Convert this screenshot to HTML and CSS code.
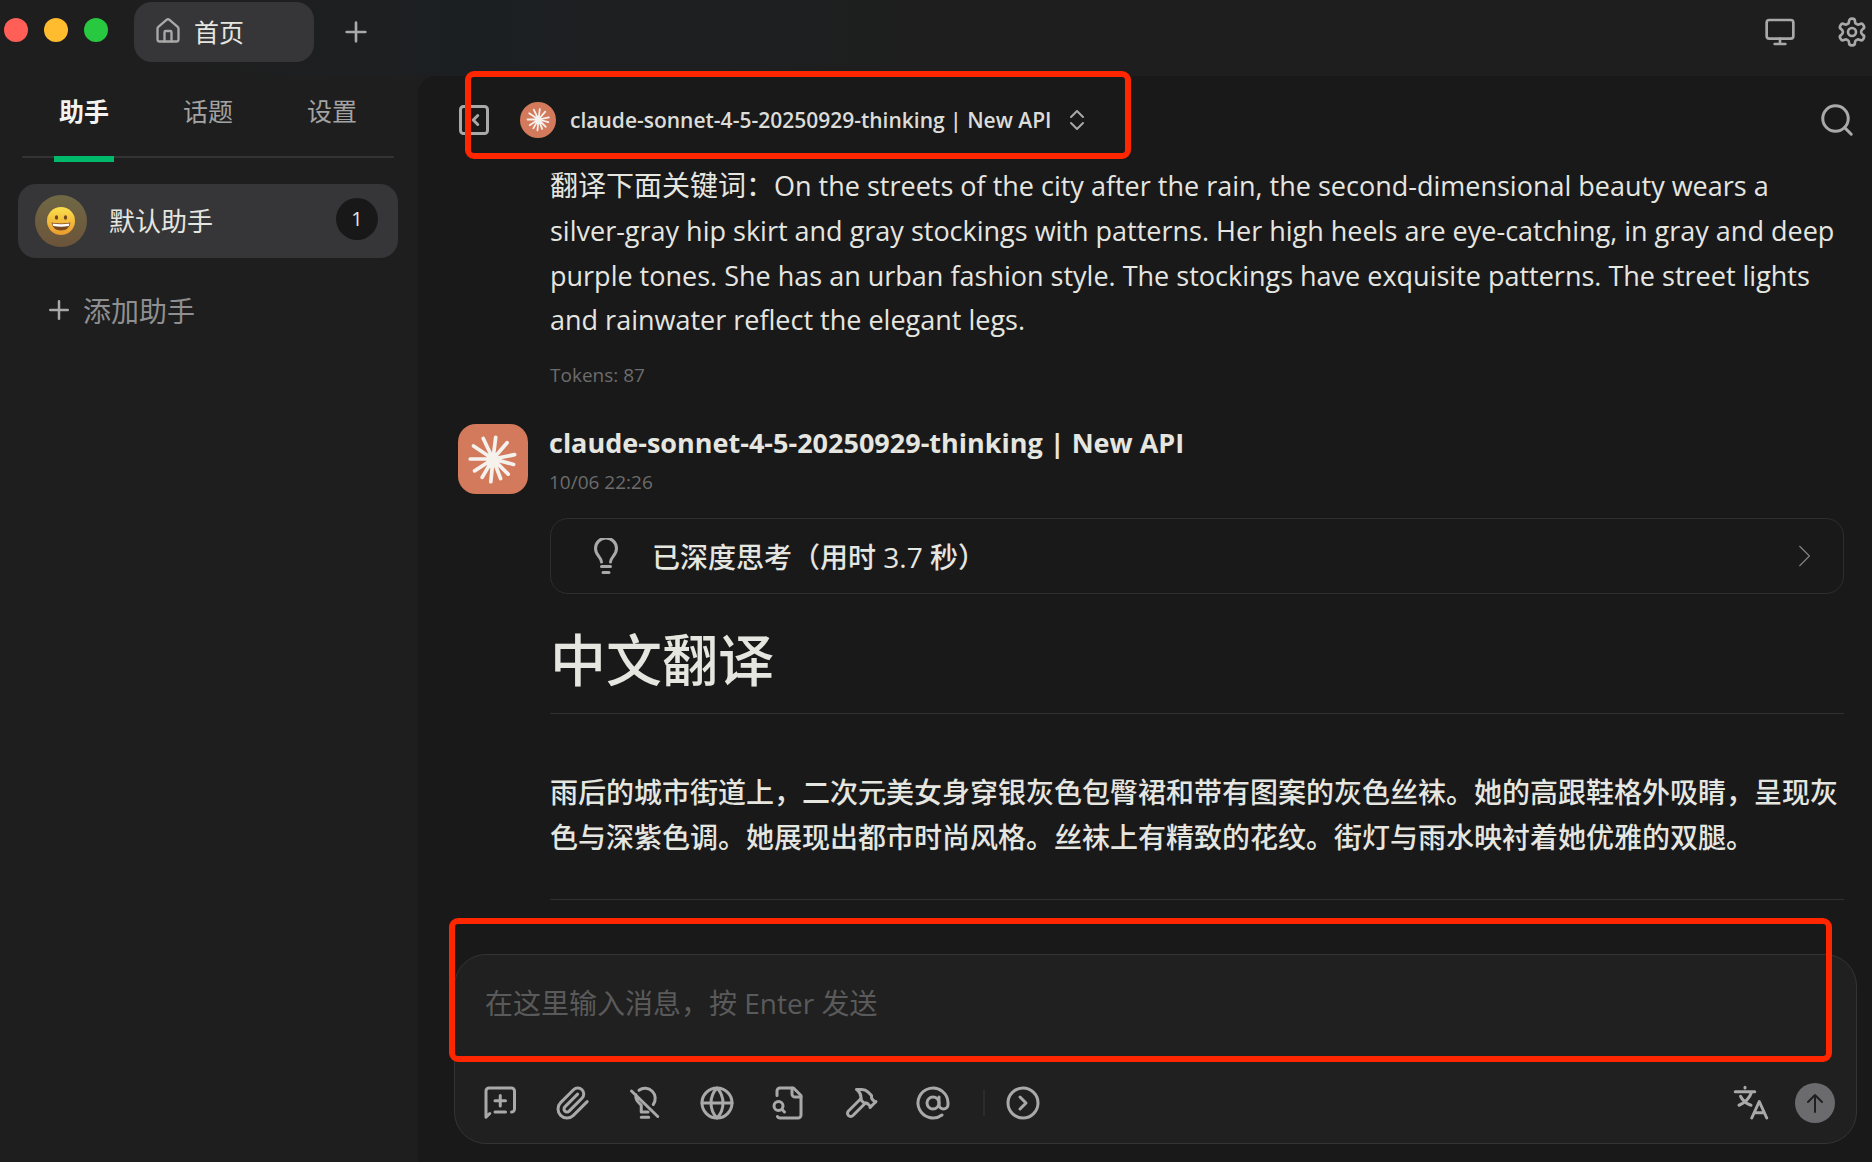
FILE: index.html
```html
<!DOCTYPE html>
<html lang="zh-CN">
<head>
    <meta charset="UTF-8">
    <meta name="viewport" content="width=device-width, initial-scale=1.0">
    <title>首页</title>
    <link rel="stylesheet" href="styles.css">
</head>
<body>

<!-- Title bar -->
<header class="titlebar">
    <div class="window-dots">
        <span class="dot red"></span>
        <span class="dot yellow"></span>
        <span class="dot green"></span>
    </div>
    <button class="window-tab">
        <svg class="icon icon-home" viewBox="0 0 24 24"><path d="M15 21v-8a1 1 0 0 0-1-1h-4a1 1 0 0 0-1 1v8"/><path d="M3 10a2 2 0 0 1 .709-1.528l7-5.999a2 2 0 0 1 2.582 0l7 5.999A2 2 0 0 1 21 10v9a2 2 0 0 1-2 2H5a2 2 0 0 1-2-2z"/></svg>
        首页
    </button>
    <button class="icon-btn new-tab" aria-label="新建标签页">
        <svg class="icon" viewBox="0 0 24 24"><path d="M5 12h14M12 5v14"/></svg>
    </button>
    <div class="titlebar-actions">
        <button class="icon-btn" aria-label="主题">
            <svg class="icon" viewBox="0 0 24 24"><rect x="2" y="3" width="20" height="14" rx="2"/><path d="M8 21h8M12 17v4"/></svg>
        </button>
        <button class="icon-btn" aria-label="设置">
            <svg class="icon" viewBox="0 0 24 24"><path d="M12.22 2h-.44a2 2 0 0 0-2 2v.18a2 2 0 0 1-1 1.73l-.43.25a2 2 0 0 1-2 0l-.15-.08a2 2 0 0 0-2.73.73l-.22.38a2 2 0 0 0 .73 2.73l.15.1a2 2 0 0 1 1 1.72v.51a2 2 0 0 1-1 1.74l-.15.09a2 2 0 0 0-.73 2.73l.22.38a2 2 0 0 0 2.73.73l.15-.08a2 2 0 0 1 2 0l.43.25a2 2 0 0 1 1 1.73V20a2 2 0 0 0 2 2h.44a2 2 0 0 0 2-2v-.18a2 2 0 0 1 1-1.73l.43-.25a2 2 0 0 1 2 0l.15.08a2 2 0 0 0 2.73-.73l.22-.39a2 2 0 0 0-.73-2.73l-.15-.08a2 2 0 0 1-1-1.74v-.5a2 2 0 0 1 1-1.74l.15-.09a2 2 0 0 0 .73-2.73l-.22-.38a2 2 0 0 0-2.73-.73l-.15.08a2 2 0 0 1-2 0l-.43-.25a2 2 0 0 1-1-1.73V4a2 2 0 0 0-2-2z"/><circle cx="12" cy="12" r="3"/></svg>
        </button>
    </div>
</header>

<div class="layout">
    <!-- Sidebar -->
    <aside class="sidebar">
        <nav class="side-tabs">
            <button class="side-tab active">助手</button>
            <button class="side-tab">话题</button>
            <button class="side-tab">设置</button>
        </nav>
        <button class="assistant">
            <span class="assistant-avatar">
                <svg viewBox="0 0 28 28">
                    <defs>
                        <linearGradient id="face" x1="0" y1="0" x2="0" y2="1">
                            <stop offset="0" stop-color="#fbe04e"/>
                            <stop offset="1" stop-color="#eb9a2c"/>
                        </linearGradient>
                    </defs>
                    <circle cx="14" cy="14" r="14" fill="url(#face)"/>
                    <ellipse cx="9.5" cy="10.5" rx="1.6" ry="2.2" fill="#70451c"/>
                    <ellipse cx="18.5" cy="10.5" rx="1.6" ry="2.2" fill="#70451c"/>
                    <path d="M4.5 15.5q9.5 2 19 0q-1.5 8-9.5 8t-9.5-8z" fill="#7a4a1e"/>
                    <path d="M5.500 16.500q8.500 1.500 17 0l-.8 2.500q-7.700 1.500-15.400 0z" fill="#fff"/>
                </svg>
            </span>
            <span class="assistant-name">默认助手</span>
            <span class="badge">1</span>
        </button>
        <button class="add-assistant">
            <svg class="icon" viewBox="0 0 24 24"><path d="M5 12h14M12 5v14"/></svg>
            添加助手
        </button>
    </aside>

    <!-- Chat -->
    <main class="chat">
        <div class="chat-header">
            <button class="icon-btn" aria-label="收起侧栏">
                <svg class="icon" viewBox="0 0 24 24"><rect x="3" y="3" width="18" height="18" rx="2"/><path d="m14.500 9-3 3 3 3"/></svg>
            </button>
            <button class="model-select">
                <span class="logo logo-small"><svg viewBox="0 0 48 48"><use href="#burst"/></svg></span>
                claude-sonnet-4-5-20250929-thinking | New API
                <svg class="icon icon-updown" viewBox="0 0 24 24"><path d="m6 15 6 6 6-6M6 9l6-6 6 6"/></svg>
            </button>
            <button class="icon-btn search" aria-label="搜索">
                <svg class="icon" viewBox="0 0 24 24"><circle cx="11" cy="11" r="8.500"/><path d="m21.500 21.500-4.400-4.400"/></svg>
            </button>
            <div class="highlight highlight-model"></div>
        </div>

        <div class="messages">
            <div class="message-user">
                <p>翻译下面关键词：<span lang="en">On the streets of the city after the rain, the second-dimensional beauty wears a silver-gray hip skirt and gray stockings with patterns. Her high heels are eye-catching, in gray and deep purple tones. She has an urban fashion style. The stockings have exquisite patterns. The street lights and rainwater reflect the elegant legs.</span></p>
                <div class="tokens">Tokens: 87</div>
            </div>

            <div class="message-head">
                <span class="logo logo-large">
                    <svg viewBox="0 0 48 48">
                        <g id="burst" stroke="#f5f2ee" stroke-width="3.400" stroke-linecap="round">
                            <path d="M24 24 15 5M24 24 26.500 4M24 24 37 9M24 24 44 20M24 24 43 29M24 24 38 38M24 24 31 42M24 24 22 45M24 24 14 41M24 24 7 35M24 24 3 24M24 24 6 12"/>
                        </g>
                    </svg>
                </span>
                <div>
                    <div class="message-name">claude-sonnet-4-5-20250929-thinking | New API</div>
                    <div class="message-time">10/06 22:26</div>
                </div>
            </div>

            <div class="message-body">
                <button class="thinking">
                    <svg class="icon icon-bulb" viewBox="0 0 24 24"><path d="M9 16c0-3-4-4.500-4-9a7 7 0 0 1 14 0c0 4.500-4 6-4 9M9 19h6M10 23h4"/></svg>
                    <span>已深度思考（用时 3.7 秒）</span>
                    <svg class="icon icon-more" viewBox="0 0 24 24"><path d="m8 3 9 9-9 9"/></svg>
                </button>
                <h1>中文翻译</h1>
                <p class="answer">雨后的城市街道上，二次元美女身穿银灰色包臀裙和带有图案的灰色丝袜。她的高跟鞋格外吸睛，呈现灰色与深紫色调。她展现出都市时尚风格。丝袜上有精致的花纹。街灯与雨水映衬着她优雅的双腿。</p>
                <hr>
            </div>
        </div>

        <!-- Message input -->
        <div class="composer">
            <textarea class="composer-input" rows="1" aria-label="消息" placeholder="在这里输入消息，按 Enter 发送"></textarea>
            <div class="toolbar">
                <button class="icon-btn" aria-label="新话题"><svg class="icon" viewBox="0 0 24 24"><path d="M19 18a2 2 0 0 0 2-2V4a2 2 0 0 0-2-2H4a2 2 0 0 0-2 2v17.500L4.500 19M11.500 7v7M8 10.500h7M8 18h7"/></svg></button>
                <button class="icon-btn" aria-label="附件"><svg class="icon" viewBox="0 0 24 24"><path d="m21.440 11.050-9.190 9.190a6 6 0 0 1-8.490-8.490l8.570-8.570A4 4 0 1 1 18 8.840l-8.590 8.570a2 2 0 0 1-2.830-2.830l8.490-8.480"/></svg></button>
                <button class="icon-btn" aria-label="思考"><svg class="icon" viewBox="0 0 24 24"><path d="M8 3.500A6.800 6.800 0 0 1 17.500 13M6 6.500C5 10 8 12 9.500 13.500V18H14M9.500 21.500h5M3 4l17.500 17"/></svg></button>
                <button class="icon-btn" aria-label="网络搜索"><svg class="icon" viewBox="0 0 24 24"><circle cx="12" cy="12" r="10"/><path d="M12 2a14.500 14.500 0 0 0 0 20 14.500 14.500 0 0 0 0-20M2 12h20"/></svg></button>
                <button class="icon-btn" aria-label="知识库"><svg class="icon" viewBox="0 0 24 24"><path d="M14 2v4a2 2 0 0 0 2 2h4"/><path d="M4.268 21a2 2 0 0 0 1.727 1H18a2 2 0 0 0 2-2V7l-5-5H6a2 2 0 0 0-2 2v3"/><path d="m9 18-1.500-1.500"/><circle cx="5" cy="14" r="3"/></svg></button>
                <button class="icon-btn" aria-label="工具"><svg class="icon" viewBox="0 0 24 24"><path d="m15 12-8.373 8.373a1 1 0 1 1-3-3L12 9"/><path d="m18 15 4-4"/><path d="m21.500 11.500-1.914-1.914A2 2 0 0 1 19 8.172V7l-2.260-2.260a6 6 0 0 0-4.202-1.756L9 2.960l.92.820A6.180 6.180 0 0 1 12 8.400V10l2 2h1.172a2 2 0 0 1 1.414.586L18.500 14.500"/></svg></button>
                <button class="icon-btn" aria-label="选择模型"><svg class="icon" viewBox="0 0 24 24"><circle cx="12" cy="12" r="4"/><path d="M16 8v5a3 3 0 0 0 6 0v-1a10 10 0 1 0-4 8"/></svg></button>
                <span class="divider"></span>
                <button class="icon-btn" aria-label="展开"><svg class="icon" viewBox="0 0 24 24"><circle cx="12" cy="12" r="10"/><path d="m10 8 4 4-4 4"/></svg></button>
                <div class="toolbar-right">
                    <button class="icon-btn" aria-label="翻译"><svg class="icon" viewBox="0 0 24 24"><path d="M1.500 4.500h13M8 1.500v.5M12.500 4.500C11 9 7.500 12 4 13.500M5 7.500c1.500 3 4 5 7 6M12.500 22l5-11 5 11M14.200 18.500h6.600"/></svg></button>
                    <button class="send" aria-label="发送"><svg class="icon" viewBox="0 0 24 24"><path d="m5 11 7-7 7 7M12 4v17"/></svg></button>
                </div>
            </div>
            <div class="highlight highlight-input"></div>
        </div>
    </main>
</div>

</body>
</html>
```

FILE: styles.css
```css
* {
    box-sizing: border-box;
}

body {
    margin: 0;
    height: 100vh;
    display: flex;
    flex-direction: column;
    overflow: hidden;
    background: #1e1e1e;
    color: #e6e6e1;
    font-family: "Open Sans", "Noto Sans CJK SC", sans-serif;
    font-size: 28px;
}

button {
    font: inherit;
    color: inherit;
    background: none;
    border: none;
    padding: 0;
    display: flex;
    align-items: center;
    cursor: pointer;
}

.icon {
    width: 36px;
    height: 36px;
    flex: none;
    fill: none;
    stroke: #a9a9a9;
    stroke-width: 2;
    stroke-linecap: round;
    stroke-linejoin: round;
}

/* Title bar */
.titlebar {
    height: 76px;
    flex: none;
    display: flex;
    align-items: flex-start;
    padding: 2px 4px 0;
    background: linear-gradient(90deg, #1e1e1e 10%, #1c1f22 25%, #1e1e1e 50%);
}

.window-dots {
    display: flex;
    gap: 16px;
    padding-top: 16px;
    margin-right: 26px;
}

.dot {
    width: 24px;
    height: 24px;
    border-radius: 50%;
}

.red {
    background: #ff5f57;
}

.yellow {
    background: #febc2e;
}

.green {
    background: #28c840;
}

.window-tab {
    width: 180px;
    height: 60px;
    gap: 12px;
    padding: 0 0 2px 20px;
    border-radius: 18px;
    background: #363638;
    font-size: 25px;
}

.icon-home {
    width: 28px;
    height: 28px;
}

.new-tab {
    height: 60px;
    margin-left: 26px;
}

.new-tab .icon {
    width: 32px;
    height: 32px;
}

.titlebar-actions {
    display: flex;
    gap: 40px;
    height: 60px;
    margin-left: auto;
}

.titlebar-actions .icon {
    width: 32px;
    height: 32px;
}

/* Sidebar */
.layout {
    flex: 1;
    min-height: 0;
    display: flex;
}

.sidebar {
    width: 418px;
    flex: none;
    padding: 0 20px 0 18px;
}

.side-tabs {
    display: flex;
    height: 82px;
    margin: 0 4px 26px;
    border-bottom: 2px solid #333;
}

.side-tab {
    flex: 1;
    height: 86px;
    padding-bottom: 18px;
    justify-content: center;
    font-size: 25px;
    color: #a3a3a3;
    background: linear-gradient(#00b96b, #00b96b) center bottom / 0 6px no-repeat;
}

.side-tab.active {
    color: #f2f2ee;
    font-weight: bold;
    background-size: 60px 6px;
}

.assistant {
    width: 100%;
    height: 74px;
    padding: 0 20px 0 17px;
    border-radius: 18px;
    background: #363638;
    font-size: 26px;
}

.assistant-avatar {
    width: 52px;
    height: 52px;
    display: flex;
    align-items: center;
    justify-content: center;
    margin-right: 22px;
    border-radius: 50%;
    background: linear-gradient(#6f6845, #6c543a);
}

.assistant-avatar svg {
    width: 28px;
}

.assistant-name {
    padding-bottom: 2px;
}

.badge {
    width: 42px;
    height: 42px;
    margin: 0 0 4px auto;
    border-radius: 50%;
    background: #181818;
    font-size: 20px;
    line-height: 42px;
}

.add-assistant {
    height: 56px;
    margin: 24px 0 0 26px;
    gap: 9px;
    color: #8f8f91;
}

.add-assistant .icon {
    width: 30px;
    height: 30px;
}

/* Chat */
.chat {
    flex: 1;
    min-width: 0;
    display: flex;
    flex-direction: column;
    padding: 0 15px 18px 36px;
    border-top-left-radius: 18px;
    background: #191919;
}

.chat-header {
    position: relative;
    height: 87px;
    flex: none;
    display: flex;
    align-items: center;
}

.chat-header .icon-btn .icon {
    width: 40px;
    height: 36px;
}

.model-select {
    gap: 14px;
    margin-left: 26px;
    font-size: 21px;
    font-weight: 600;
    color: #dcdcd8;
}

.icon-updown {
    width: 24px;
    height: 24px;
}

.search {
    margin-left: auto;
}

.logo {
    flex: none;
    display: flex;
    align-items: center;
    justify-content: center;
    background: #d37a5c;
}

.logo-small {
    width: 36px;
    height: 36px;
    border-radius: 50%;
}

.logo-small svg {
    width: 25px;
}

.logo-large {
    width: 70px;
    height: 70px;
    border-radius: 18px;
}

.logo-large svg {
    width: 52px;
}

.messages {
    flex: 1;
    min-height: 0;
    overflow: hidden;
    padding-right: 13px;
}

.message-user,
.message-body {
    margin-left: 96px;
}

.message-user p {
    margin: 0;
    line-height: 1.6;
}

.message-user span {
    font-size: 27px;
}

.tokens,
.message-time {
    color: #6c6c6c;
    font-size: 19px;
    line-height: 28px;
}

.tokens {
    margin-top: 19px;
}

.message-head {
    display: flex;
    gap: 21px;
    margin: 35px 0 22px 4px;
}

.message-name {
    font-size: 27px;
    font-weight: bold;
    line-height: 38px;
    margin-bottom: 6px;
}

.thinking {
    width: 100%;
    height: 76px;
    padding: 0 26px 0 37px;
    border: 1px solid #2e2e2e;
    border-radius: 18px;
    font-weight: 500;
}

.icon-bulb {
    margin-right: 28px;
}

.icon-more {
    width: 26px;
    height: 26px;
    margin-left: auto;
    stroke: #858585;
    stroke-width: 1;
}

h1 {
    margin: 26px 0 56px;
    padding-bottom: 15px;
    border-bottom: 1px solid #303030;
    font-size: 56px;
    font-weight: 500;
    line-height: 78px;
}

.answer {
    margin: 0 0 39px;
    font-weight: 500;
    line-height: 1.6;
}

hr {
    margin: 0;
    border: none;
    border-top: 1px solid #303030;
}

/* Message input */
.composer {
    position: relative;
    flex: none;
    border: 1px solid #343434;
    border-radius: 32px;
    background: #202020;
}

.composer-input {
    display: block;
    width: 100%;
    height: 121px;
    padding: 26px 30px;
    border: none;
    outline: none;
    resize: none;
    background: none;
    color: inherit;
    font: inherit;
    line-height: 45px;
}

.composer-input::placeholder {
    color: #5a5a5a;
}

.toolbar {
    display: flex;
    align-items: center;
    gap: 36px;
    height: 67px;
    padding: 0 21px 13px 28px;
}

.divider {
    width: 2px;
    height: 26px;
    margin: 0 -16px 0 -4px;
    background: #2c2c2c;
}

.toolbar-right {
    display: flex;
    align-items: center;
    gap: 26px;
    margin-left: auto;
}

.send {
    width: 40px;
    height: 40px;
    justify-content: center;
    border-radius: 50%;
    background: #6b6b6e;
}

.send .icon {
    width: 24px;
    height: 24px;
    stroke: #202020;
}

/* Red marker frames */
.highlight {
    position: absolute;
    border: 6px solid #ff2600;
    border-radius: 9px;
    pointer-events: none;
}

.highlight-model {
    left: 11px;
    top: -5px;
    width: 666px;
    height: 88px;
}

.highlight-input {
    left: -6px;
    right: 24px;
    top: -37px;
    height: 144px;
}
```
